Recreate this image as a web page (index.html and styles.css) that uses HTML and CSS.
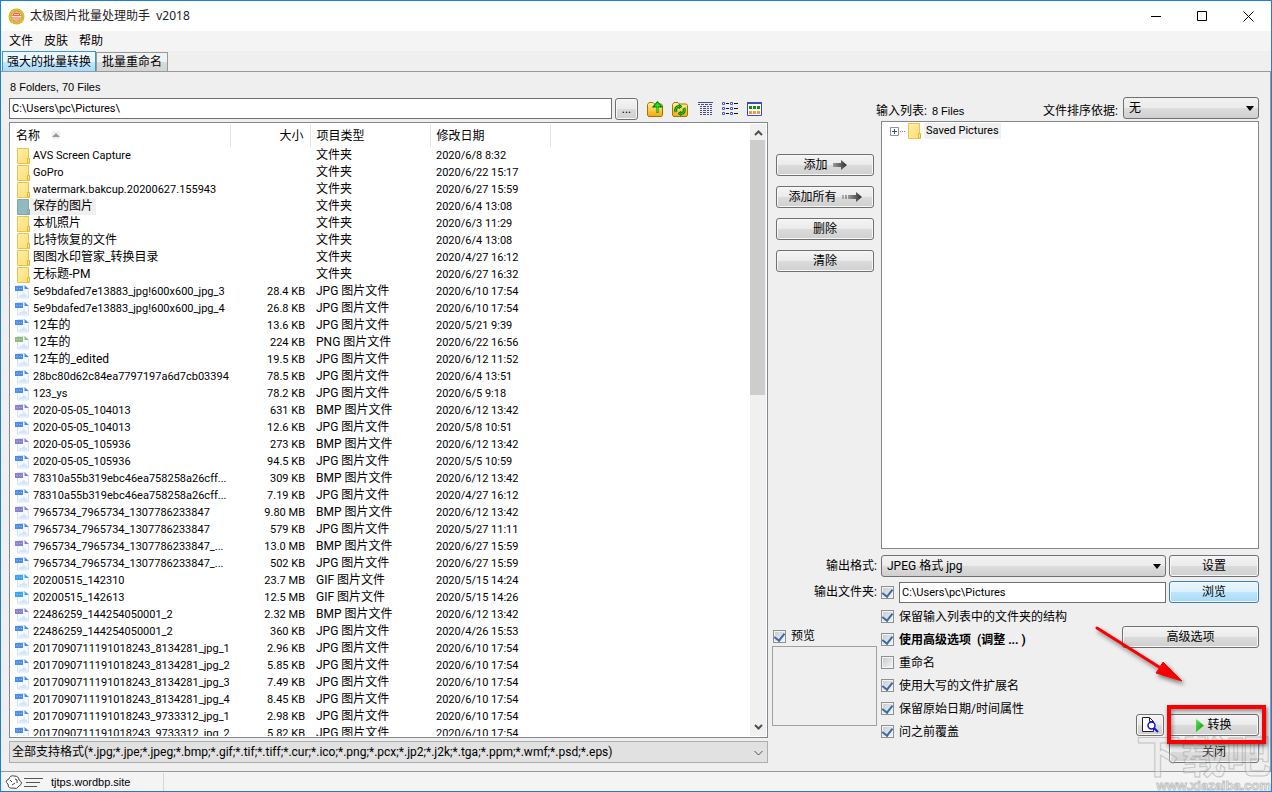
FILE: index.html
```html
<!DOCTYPE html>
<html lang="zh-CN">
<head>
<meta charset="utf-8">
<title>太极图片批量处理助手 v2018</title>
<link rel="stylesheet" href="styles.css">
</head>
<body>
<svg class="defs" aria-hidden="true">
  <defs>
    <linearGradient id="gold" x1="0" y1="0" x2="0" y2="1"><stop offset="0" stop-color="#fff3a8"/><stop offset="1" stop-color="#f5a800"/></linearGradient>
    <linearGradient id="dark" x1="0" y1="0" x2="1" y2="0"><stop offset="0" stop-color="#9a9a9a"/><stop offset="1" stop-color="#2e2e2e"/></linearGradient>
    <linearGradient id="play" x1="0" y1="0" x2="1" y2="1"><stop offset="0" stop-color="#5dea5d"/><stop offset="1" stop-color="#009000"/></linearGradient>
    <linearGradient id="fold" x1="0" y1="0" x2="1" y2="1"><stop offset="0" stop-color="#ffefa8"/><stop offset="1" stop-color="#ffdc70"/></linearGradient>
  </defs>
  <symbol id="folder" viewBox="0 0 15 16"><path d="M2.5 .5h11v10h1v5h-12z" fill="url(#fold)" stroke="#e9c44c"/><path d="M12.5 15v-4.500h2V15z" fill="#ffe48a" stroke="#e0b63c"/></symbol>
  <symbol id="folder-sel" viewBox="0 0 15 16"><path d="M2.500 .5h11v10h1v5h-12z" fill="#92bac0" stroke="#7ea9a6"/><path d="M12.500 15v-4.500h2V15z" fill="#98bfc0" stroke="#86aa98"/></symbol>
  <symbol id="file" viewBox="0 0 15 16"><path d="M2.500 1.500h7l4 4v8.500h-11z" fill="#f5f9ff" stroke="#d3e2f6"/><path d="M4 13q.5-3 3-2 1.500-3.500 3.500-.5 2 0 2 2.500z" fill="#d5e5fa"/><path d="M9.500 1v4H14z" fill="currentColor"/><path d="M0 2h8v5H0z" fill="currentColor"/><path d="M2 3.500v2M4 4.500h1M6 4.500h1" stroke="#fff" stroke-opacity=".4"/></symbol>
</svg>
<div class="window">
  <header class="titlebar">
    <svg class="logo" viewBox="0 0 17 17" width="17" height="17"><circle cx="8.500" cy="8.500" r="8" fill="#a9c62b"/><circle cx="8.500" cy="8.500" r="7" fill="#e5cf2c"/><circle cx="8.500" cy="8.500" r="5.500" fill="#fff0d6" stroke="#f2703a"/><path d="M4 8h9L11 4.500H6z" fill="#f16440"/><path d="M4 10h9M5 12h7" stroke="#f0653c"/><path d="M6 6.500h5" stroke="#ffe0b0"/></svg>
    <h1 class="title">太极图片批量处理助手&nbsp; v2018</h1>
    <div class="caption">
      <button type="button" aria-label="最小化"><svg width="10" height="10"><path d="M0 5.500h10" stroke="#000"/></svg></button>
      <button type="button" aria-label="最大化"><svg width="10" height="10"><path d="M.5.5h9v9h-9z" fill="none" stroke="#000"/></svg></button>
      <button type="button" aria-label="关闭窗口"><svg width="11" height="11"><path d="M.5.5l10 10M10.500.5l-10 10" stroke="#000" fill="none"/></svg></button>
    </div>
  </header>
  <nav class="menu">
    <button type="button">文件</button>
    <button type="button">皮肤</button>
    <button type="button">帮助</button>
  </nav>
  <div class="tabs" role="tablist">
    <button type="button" class="tab active" role="tab" aria-selected="true">强大的批量转换</button>
    <button type="button" class="tab" role="tab" aria-selected="false">批量重命名</button>
  </div>
  <main class="panel">
    <section class="browser">
      <p class="counts arial">8 Folders, 70 Files</p>
      <div class="pathrow">
        <input class="box" type="text" aria-label="路径" value="C:\Users\pc\Pictures\">
        <button type="button" class="btn dots" aria-label="浏览路径">...</button>
        <div class="tools">
          <button type="button" aria-label="上一级"><svg width="16" height="16" viewBox="0 0 16 16"><path d="M.5 14V3.500L2 1.500h4L7.500 3h7l1 1.500V14l-1 1.500h-13z" fill="url(#gold)" stroke="#a87400"/><path d="M10.500 12V5M7 5.500L10.500 1.500l3.500 4z" fill="#067a06" stroke="#067a06" stroke-width="2"/><path d="M10.500 11.500V4M8 5L10.500 2l2.500 3z" fill="#1bea1b" stroke="#1bea1b"/></svg></button>
          <button type="button" aria-label="刷新"><svg width="16" height="16" viewBox="0 0 16 16"><path d="M.5 14V3.500L2 1.500h4L7.500 3h7l1 1.500V14l-1 1.500h-13z" fill="url(#gold)" stroke="#a87400"/><path d="M4 11q-1.500-5 3-5.500M12 7q1.500 5-3 5.500" fill="none" stroke="#067a06" stroke-width="3"/><path d="M7 3.500v4l3-2zM9 10.500v4l-3-2z" fill="#1bd01b" stroke="#067a06"/><path d="M4 11q-1.500-5 3-5.500M12 7q1.500 5-3 5.500" fill="none" stroke="#2fdd2f"/></svg></button>
          <button type="button" aria-label="详细信息"><svg width="16" height="13" viewBox="0 0 16 13"><path d="M1 .5h15M1 2.500h2m1 0h3m1 0h3m1 0h3M3 4.500h2m1 0h3m1 0h2m1 0h2M3 6.500h2m1 0h3m1 0h2m1 0h2M3 8.500h2m1 0h3m1 0h2m1 0h2M3 10.500h2m1 0h3m1 0h2m1 0h2M3 12.500h2m1 0h3m1 0h2m1 0h2" stroke="#4a4a90"/></svg></button>
          <button type="button" aria-label="列表"><svg width="16" height="14" viewBox="0 0 16 14"><path d="M.5.500h2v2h-2zM8.500.500h2v2h-2zM.5 5.500h2v2h-2zM8.500 5.500h2v2h-2zM.5 10.500h2v2h-2zM8.500 10.500h2v2h-2z" fill="#fff" stroke="#5252c8"/><path d="M4 1.500h3m5 0h4M4 6.500h3m5 0h4M4 11.500h3m5 0h4" stroke="#111"/></svg></button>
          <button type="button" aria-label="缩略图"><svg width="15" height="14" viewBox="0 0 15 14"><path d="M.5.5h14v13H.5z" fill="#fff" stroke="#3f49c0"/><path d="M0 1h15" stroke="#3f49c0" stroke-width="2"/><path d="M2 4h3v3H2zM6 4h3v3H6zM10 4h3v3h-3z" fill="#0a970a"/><path d="M2 9h3v3H2zM6 9h3v3H6zM10 9h3v3h-3z" fill="#f79536"/></svg></button>
        </div>
      </div>
      <div class="filelist">
        <div class="rows">
          <table class="files">
            <colgroup><col class="c-name"><col class="c-size"><col class="c-type"><col class="c-date"><col></colgroup>
            <thead><tr><th>名称<svg class="sort" width="8" height="8"><path d="M0 6L4 2l4 4z" fill="#999"/></svg></th><th class="num">大小</th><th>项目类型</th><th>修改日期</th><th class="rest"></th></tr></thead>
            <tbody>
              <tr><td><svg class="ic"><use href="#folder"/></svg><span>AVS Screen Capture</span></td><td></td><td>文件夹</td><td>2020/6/8 8:32</td><td></td></tr>
              <tr><td><svg class="ic"><use href="#folder"/></svg><span>GoPro</span></td><td></td><td>文件夹</td><td>2020/6/22 15:17</td><td></td></tr>
              <tr><td><svg class="ic"><use href="#folder"/></svg><span>watermark.bakcup.20200627.155943</span></td><td></td><td>文件夹</td><td>2020/6/27 15:59</td><td></td></tr>
              <tr class="selected"><td><svg class="ic"><use href="#folder-sel"/></svg><span class="zh">保存的图片</span></td><td></td><td>文件夹</td><td>2020/6/4 13:08</td><td></td></tr>
              <tr><td><svg class="ic"><use href="#folder"/></svg><span class="zh">本机照片</span></td><td></td><td>文件夹</td><td>2020/6/3 11:29</td><td></td></tr>
              <tr><td><svg class="ic"><use href="#folder"/></svg><span class="zh">比特恢复的文件</span></td><td></td><td>文件夹</td><td>2020/6/4 13:08</td><td></td></tr>
              <tr><td><svg class="ic"><use href="#folder"/></svg><span class="zh">图图水印管家_转换目录</span></td><td></td><td>文件夹</td><td>2020/4/27 16:12</td><td></td></tr>
              <tr><td><svg class="ic"><use href="#folder"/></svg><span class="zh">无标题-PM</span></td><td></td><td>文件夹</td><td>2020/6/27 16:32</td><td></td></tr>
              <tr><td><svg class="ic jpg"><use href="#file"/></svg><span>5e9bdafed7e13883_jpg!600x600_jpg_3</span></td><td>28.4 KB</td><td>JPG 图片文件</td><td>2020/6/10 17:54</td><td></td></tr>
              <tr><td><svg class="ic jpg"><use href="#file"/></svg><span>5e9bdafed7e13883_jpg!600x600_jpg_4</span></td><td>26.8 KB</td><td>JPG 图片文件</td><td>2020/6/10 17:54</td><td></td></tr>
              <tr><td><svg class="ic jpg"><use href="#file"/></svg><span class="zh">12车的</span></td><td>13.6 KB</td><td>JPG 图片文件</td><td>2020/5/21 9:39</td><td></td></tr>
              <tr><td><svg class="ic png"><use href="#file"/></svg><span class="zh">12车的</span></td><td>224 KB</td><td>PNG 图片文件</td><td>2020/6/22 16:56</td><td></td></tr>
              <tr><td><svg class="ic jpg"><use href="#file"/></svg><span class="zh">12车的_edited</span></td><td>19.5 KB</td><td>JPG 图片文件</td><td>2020/6/12 11:52</td><td></td></tr>
              <tr><td><svg class="ic jpg"><use href="#file"/></svg><span>28bc80d62c84ea7797197a6d7cb03394</span></td><td>78.5 KB</td><td>JPG 图片文件</td><td>2020/6/4 13:51</td><td></td></tr>
              <tr><td><svg class="ic jpg"><use href="#file"/></svg><span>123_ys</span></td><td>78.2 KB</td><td>JPG 图片文件</td><td>2020/6/5 9:18</td><td></td></tr>
              <tr><td><svg class="ic bmp"><use href="#file"/></svg><span>2020-05-05_104013</span></td><td>631 KB</td><td>BMP 图片文件</td><td>2020/6/12 13:42</td><td></td></tr>
              <tr><td><svg class="ic jpg"><use href="#file"/></svg><span>2020-05-05_104013</span></td><td>12.6 KB</td><td>JPG 图片文件</td><td>2020/5/8 10:51</td><td></td></tr>
              <tr><td><svg class="ic bmp"><use href="#file"/></svg><span>2020-05-05_105936</span></td><td>273 KB</td><td>BMP 图片文件</td><td>2020/6/12 13:42</td><td></td></tr>
              <tr><td><svg class="ic jpg"><use href="#file"/></svg><span>2020-05-05_105936</span></td><td>94.5 KB</td><td>JPG 图片文件</td><td>2020/5/5 10:59</td><td></td></tr>
              <tr><td><svg class="ic bmp"><use href="#file"/></svg><span>78310a55b319ebc46ea758258a26cff...</span></td><td>309 KB</td><td>BMP 图片文件</td><td>2020/6/12 13:42</td><td></td></tr>
              <tr><td><svg class="ic jpg"><use href="#file"/></svg><span>78310a55b319ebc46ea758258a26cff...</span></td><td>7.19 KB</td><td>JPG 图片文件</td><td>2020/4/27 16:12</td><td></td></tr>
              <tr><td><svg class="ic bmp"><use href="#file"/></svg><span>7965734_7965734_1307786233847</span></td><td>9.80 MB</td><td>BMP 图片文件</td><td>2020/6/12 13:42</td><td></td></tr>
              <tr><td><svg class="ic jpg"><use href="#file"/></svg><span>7965734_7965734_1307786233847</span></td><td>579 KB</td><td>JPG 图片文件</td><td>2020/5/27 11:11</td><td></td></tr>
              <tr><td><svg class="ic bmp"><use href="#file"/></svg><span>7965734_7965734_1307786233847_...</span></td><td>13.0 MB</td><td>BMP 图片文件</td><td>2020/6/27 15:59</td><td></td></tr>
              <tr><td><svg class="ic jpg"><use href="#file"/></svg><span>7965734_7965734_1307786233847_...</span></td><td>502 KB</td><td>JPG 图片文件</td><td>2020/6/27 15:59</td><td></td></tr>
              <tr><td><svg class="ic gif"><use href="#file"/></svg><span>20200515_142310</span></td><td>23.7 MB</td><td>GIF 图片文件</td><td>2020/5/15 14:24</td><td></td></tr>
              <tr><td><svg class="ic gif"><use href="#file"/></svg><span>20200515_142613</span></td><td>12.5 MB</td><td>GIF 图片文件</td><td>2020/5/15 14:26</td><td></td></tr>
              <tr><td><svg class="ic bmp"><use href="#file"/></svg><span>22486259_144254050001_2</span></td><td>2.32 MB</td><td>BMP 图片文件</td><td>2020/6/12 13:42</td><td></td></tr>
              <tr><td><svg class="ic jpg"><use href="#file"/></svg><span>22486259_144254050001_2</span></td><td>360 KB</td><td>JPG 图片文件</td><td>2020/4/26 15:53</td><td></td></tr>
              <tr><td><svg class="ic jpg"><use href="#file"/></svg><span>2017090711191018243_8134281_jpg_1</span></td><td>2.96 KB</td><td>JPG 图片文件</td><td>2020/6/10 17:54</td><td></td></tr>
              <tr><td><svg class="ic jpg"><use href="#file"/></svg><span>2017090711191018243_8134281_jpg_2</span></td><td>5.85 KB</td><td>JPG 图片文件</td><td>2020/6/10 17:54</td><td></td></tr>
              <tr><td><svg class="ic jpg"><use href="#file"/></svg><span>2017090711191018243_8134281_jpg_3</span></td><td>7.49 KB</td><td>JPG 图片文件</td><td>2020/6/10 17:54</td><td></td></tr>
              <tr><td><svg class="ic jpg"><use href="#file"/></svg><span>2017090711191018243_8134281_jpg_4</span></td><td>8.45 KB</td><td>JPG 图片文件</td><td>2020/6/10 17:54</td><td></td></tr>
              <tr><td><svg class="ic jpg"><use href="#file"/></svg><span>2017090711191018243_9733312_jpg_1</span></td><td>2.98 KB</td><td>JPG 图片文件</td><td>2020/6/10 17:54</td><td></td></tr>
              <tr><td><svg class="ic jpg"><use href="#file"/></svg><span>2017090711191018243_9733312_jpg_2</span></td><td>5.82 KB</td><td>JPG 图片文件</td><td>2020/6/10 17:54</td><td></td></tr>
            </tbody>
          </table>
        </div>
        <div class="scroll">
          <svg width="9" height="6"><path d="M1 5l3.500-3.500L8 5" fill="none" stroke="#505050" stroke-width="2"/></svg>
          <div class="track"><div class="thumb"></div></div>
          <svg width="9" height="6"><path d="M1 1l3.500 3.500L8 1" fill="none" stroke="#505050" stroke-width="2"/></svg>
        </div>
      </div>
      <div class="drop flat">
        <select aria-label="文件筛选"><option>全部支持格式(*.jpg;*.jpe;*.jpeg;*.bmp;*.gif;*.tif;*.tiff;*.cur;*.ico;*.png;*.pcx;*.jp2;*.j2k;*.tga;*.ppm;*.wmf;*.psd;*.eps)</option></select>
        <svg width="9" height="6"><path d="M.5 1l4 4 4-4" fill="none" stroke="#505050"/></svg>
      </div>
    </section>

    <section class="work">
      <div class="inhead">
        <span class="inlabel">输入列表:</span><span class="arial">8 Files</span>
        <label class="sortlabel" for="sortby">文件排序依据:</label>
        <div class="drop sortdrop"><select id="sortby"><option>无</option></select><svg width="8" height="5"><path d="M0 0h8L4 5z"/></svg></div>
      </div>
      <div class="actions">
        <button type="button" class="btn">添加<svg width="14" height="10" viewBox="0 0 14 10"><path d="M0 3h8V0l6 5-6 5V7H0z" fill="url(#dark)"/></svg></button>
        <button type="button" class="btn">添加所有<svg width="20" height="10" viewBox="0 0 20 10"><path d="M0 3h2v4H0z" fill="#aaa"/><path d="M3 3h2v4H3z" fill="#999"/><path d="M6 3h8V0l6 5-6 5V7H6z" fill="url(#dark)"/></svg></button>
        <button type="button" class="btn">删除</button>
        <button type="button" class="btn">清除</button>
      </div>
      <div class="tree">
        <div class="node">
          <svg width="16" height="9" viewBox="0 0 16 9"><path d="M.5.500h8v8h-8z" fill="#fff" stroke="#919191"/><path d="M2 4.500h5M4.500 2v5" stroke="#33509b"/><path d="M10 4.500h6" stroke="#888" stroke-dasharray="1 1"/></svg>
          <svg class="ic"><use href="#folder"/></svg>
          <span>Saved Pictures</span>
        </div>
      </div>
      <label class="rlabel" for="format">输出格式:</label>
      <div class="outrow">
        <div class="drop"><select id="format"><option>JPEG 格式 jpg</option></select><svg width="8" height="5"><path d="M0 0h8L4 5z"/></svg></div>
        <button type="button" class="btn side">设置</button>
      </div>
      <label class="rlabel" for="outdir">输出文件夹:</label>
      <div class="outrow">
        <input class="tick" type="checkbox" aria-label="启用输出文件夹" checked>
        <input class="box" id="outdir" type="text" value="C:\Users\pc\Pictures">
        <button type="button" class="btn side hot">浏览</button>
      </div>
      <div class="preview">
        <label class="opt"><input class="tick" type="checkbox" checked>预览</label>
        <div class="canvas"></div>
      </div>
      <div class="options">
        <div class="checks">
          <label class="opt"><input class="tick" type="checkbox" checked>保留输入列表中的文件夹的结构</label>
          <label class="opt strong"><input class="tick" type="checkbox" checked>使用高级选项&nbsp; (调整 ... )</label>
          <label class="opt"><input class="tick" type="checkbox">重命名</label>
          <label class="opt"><input class="tick" type="checkbox" checked>使用大写的文件扩展名</label>
          <label class="opt"><input class="tick" type="checkbox" checked>保留原始日期/时间属性</label>
          <label class="opt"><input class="tick" type="checkbox" checked>问之前覆盖</label>
        </div>
        <div class="finish">
          <button type="button" class="btn adv">高级选项</button>
          <svg class="arrow" width="100" height="68" viewBox="0 0 100 68"><path d="M6 6l62 39" stroke="#fb0000" stroke-width="3" stroke-linecap="round"/><path d="M72 40l19 19-26-8 4-6z" fill="#fb0000" stroke="#fb0000" stroke-linejoin="round"/></svg>
          <div class="run">
            <button type="button" class="btn find" aria-label="预览结果"><svg width="17" height="16" viewBox="0 0 17 16"><path d="M11.500 5V4.500L7.500.5h-7v14h11V12M7.500.5v4h4" fill="#fff" stroke="#222"/><circle cx="9.500" cy="8.500" r="3.500" fill="#fff" stroke="#1010e0" stroke-width="1.500"/><path d="M12 11l4 4" stroke="#1010e0" stroke-width="2"/></svg></button>
            <div class="convert">
              <button type="button" class="btn side"><svg width="8" height="13" viewBox="0 0 8 13"><path d="M0 0l8 6.500L0 13z" fill="url(#play)"/></svg>转换</button>
              <span class="mark"></span>
            </div>
          </div>
          <button type="button" class="btn side">关闭</button>
        </div>
      </div>
    </section>
  </main>
  <footer class="status">
    <svg width="38" height="16" viewBox="0 0 38 16"><path d="M3 10Q-1 7 4 5q1-4 5-3 5 0 5 4 5 3 0 6-2 4-6 2-5 1-5-4zM5 6l2 2M10 5q3 0 2 4M7 11l3-2" fill="#fff" stroke="#444"/><path d="M19 4.500h19M21 8.500h14M19 12.500h13" stroke="#555"/></svg>
    <a class="arial site" href="#">tjtps.wordbp.site</a>
  </footer>
  <div class="watermark" aria-hidden="true">
    <span class="wm-name">下载吧</span>
    <span class="wm-url">www.xiazaiba.com</span>
  </div>
</div>
</body>
</html>
```

FILE: styles.css
```css
* { box-sizing: border-box; }
html, body { height: 100%; }
body {
  margin: 0;
  font: 12px/16px Roboto, "Noto Sans CJK SC", sans-serif;
  color: #000;
  background: #efefef;
}
button, input, select { font: inherit; color: inherit; }
button, select { margin: 0; padding: 0; border: 0; background: none; }
p, h1 { margin: 0; }
svg { display: block; flex: none; }
.defs { position: absolute; width: 0; height: 0; }
.arial { font-family: "Liberation Sans", Arial, sans-serif; font-size: 11px; }

.window {
  position: relative;
  display: flex;
  flex-direction: column;
  height: 100vh;
  min-height: 560px;
  border: 1px solid #1b80d6;
  overflow: hidden;
}
.titlebar {
  display: flex;
  align-items: center;
  flex: none;
  height: 30px;
  padding-left: 7px;
  background: #fff;
}
.title {
  flex: 1;
  margin-left: 5px;
  font: 400 12px/16px "Noto Sans", "Noto Sans CJK SC", sans-serif;
  color: #222;
}
.caption { display: flex; }
.caption button { display: grid; place-items: center; width: 46px; height: 30px; }

.menu { display: flex; flex: none; gap: 11px; height: 20px; padding-left: 8px; background: #f4f4f4; }
.tabs { display: flex; flex: none; align-items: flex-end; height: 20px; padding-left: 1px; }
.tab {
  height: 19px;
  padding: 0 5px;
  border: 1px solid #999;
  border-bottom: 0;
  background: linear-gradient(#f2f2f2 50%, #dadada 50%, #d4d4d4);
}
.tab.active {
  height: 20px;
  padding: 0 4px;
  border-color: #3a9ac8;
  background: linear-gradient(#eaf7fe 50%, #c6e8fb 50%, #a8dcf8);
}

.panel {
  display: grid;
  grid-template-columns: minmax(0, 759fr) minmax(0, 487fr);
  grid-template-rows: minmax(0, 1fr);
  gap: 4px;
  flex: 1;
  min-height: 0;
  padding: 7px 11px 8px 8px;
  border: solid #999;
  border-width: 1px 1px 1px 0;
}
.browser { display: flex; flex-direction: column; gap: 3px; min-width: 0; }
.counts { line-height: 16px; padding-left: 1px; }
.pathrow { display: flex; align-items: center; gap: 3px; height: 21px; }
.box {
  flex: 1;
  min-width: 0;
  height: 21px;
  padding: 0 2px;
  border: 1px solid #707070;
  background: #fff;
  font-size: 11px;
}
.btn {
  display: flex;
  align-items: center;
  justify-content: center;
  gap: 5px;
  height: 22px;
  border: 1px solid #707070;
  border-radius: 3px;
  background: linear-gradient(#f4f4f4, #eaeaea 50%, #dbdbdb 50%, #d0d0d0);
  box-shadow: inset 0 0 0 1px #f7f7f7;
}
.btn.hot {
  border-color: #3c7fb1;
  background: linear-gradient(#eaf6fd, #d9f0fc 50%, #bee6fd 50%, #a7d9f5);
}
.dots { width: 23px; }
.tools { display: flex; align-items: center; justify-content: space-between; width: 115px; margin: 0 6px 0 6px; }
.tools button { display: block; }

.filelist {
  display: flex;
  flex: 1 1 0;
  min-height: 0;
  padding: 1px 1px 1px 0;
  border: 1px solid #828790;
  background: #fff;
}
.rows { flex: 1; min-width: 0; overflow: hidden; }
.files { width: 100%; border-collapse: collapse; table-layout: fixed; }
.c-name { width: 220px; }
.c-size { width: 80px; }
.c-type, .c-date { width: 120px; }
.files th {
  height: 23px;
  padding: 0 6px;
  border-right: 1px solid #e5e5e5;
  font-weight: 400;
  text-align: left;
}
.files .num { text-align: right; }
.files .rest { border: 0; }
.files tbody { font-size: 11px; }
.files td { height: 17px; padding: 0 6px; line-height: 17px; white-space: nowrap; }
.files td:nth-child(1) { display: flex; align-items: center; padding: 0 0 0 5px; }
.files td:nth-child(1) span { padding: 0 3px; }
.files td:nth-child(2) { padding-right: 5px; text-align: right; }
.files td:nth-child(3), .files .zh { font-size: 12px; }
.selected span { background: #f0f0f0; }
.sort { display: inline-block; margin-left: 12px; vertical-align: 1px; background: #f0f0f0; }
.ic { width: 15px; height: 16px; }
.jpg { color: #4a8ce6; }
.png { color: #8fbd7d; }
.bmp { color: #8a80c8; }
.gif { color: #38a3ee; }

.scroll { display: flex; flex-direction: column; align-items: center; width: 16px; padding: 6px 0; background: #f0f0f0; }
.track { flex: 1; align-self: stretch; margin: 4px 1px 4px 0; }
.thumb { height: 44%; background: #cdcdcd; }

.drop { position: relative; display: flex; flex: 1; min-width: 0; height: 22px; }
.drop select {
  appearance: none;
  width: 100%;
  padding: 0 20px 0 5px;
  border: 1px solid #707070;
  border-radius: 3px;
  background: linear-gradient(#f2f2f2, #ebebeb 50%, #dddddd 50%, #cfcfcf);
}
.drop svg { position: absolute; right: 5px; top: 9px; pointer-events: none; }
.drop.flat { flex: none; }
.drop.flat select { padding-left: 2px; border-color: #adadad; border-radius: 0; background: #e1e1e1; }

.work {
  display: grid;
  grid-template-columns: 105px minmax(0, 1fr);
  grid-template-rows: 22px minmax(0, 1fr) 26px 22px 160px;
  column-gap: 4px;
  padding-top: 18px;
}
.inhead { grid-column: 1 / 3; display: flex; align-items: flex-end; padding-left: 104px; }
.inlabel { margin-right: 5px; }
.sortlabel { margin-left: auto; margin-right: 5px; }
.sortdrop { flex: none; width: 36%; max-width: 136px; }
.actions { display: flex; flex-direction: column; gap: 10px; padding: 35px 3px 0 4px; }
.tree { margin: 2px 0 6px; padding: 1px 8px; border: 1px solid #828790; background: #fff; }
.node { display: flex; align-items: center; font-size: 11px; }
.node span { margin-left: 3px; padding: 0 2px; background: #f0f0f0; }
.rlabel { text-align: right; line-height: 22px; }
.outrow { display: flex; align-items: center; align-self: start; gap: 3px; height: 22px; }
.side { width: 90px; flex: none; }
.tick {
  appearance: none;
  display: grid;
  place-items: center;
  flex: none;
  width: 13px;
  height: 13px;
  margin: 0 2px 0 0;
  border: 1px solid #8e8f8f;
  background: linear-gradient(135deg, #c4c9cf, #f6f6f6);
  box-shadow: inset 0 0 0 1px #f4f4f4;
}
.tick:checked::after {
  content: "";
  width: 5px;
  height: 8px;
  margin-bottom: 2px;
  border: solid #3a6ba8;
  border-width: 0 2px 2px 0;
  transform: rotate(38deg);
}
.opt { display: flex; align-items: center; gap: 3px; height: 23px; white-space: nowrap; }
.strong { font-weight: 700; }
.preview { padding: 23px 0 0 0; }
.preview .opt { height: 20px; padding-left: 1px; }
.canvas { height: 80px; border: 1px solid #a0a0a0; }
.options { display: flex; }
.checks { flex: 1; min-width: 0; padding-top: 2px; }
.finish { position: relative; display: flex; flex-direction: column; align-items: flex-end; gap: 5px; padding-top: 23px; }
.adv { width: 137px; }
.run { display: flex; gap: 5px; margin-top: auto; }
.find { width: 28px; }
.convert { position: relative; z-index: 1; }
.convert .btn { gap: 3px; }
.mark {
  position: absolute;
  inset: -9px -7px -8px -2px;
  border: 4px solid #fb0000;
  box-shadow: 1px 2px 4px rgba(0, 0, 0, .55), inset 1px 2px 4px rgba(0, 0, 0, .45);
  pointer-events: none;
}
.arrow { position: absolute; right: 68px; top: 19px; filter: drop-shadow(2px 3px 2px rgba(0, 0, 0, .5)); pointer-events: none; }

.status {
  display: flex;
  align-items: center;
  flex: none;
  height: 19px;
  margin-left: 2px;
  padding-left: 2px;
  background: #f4f4f4;
}
.status .site {
  width: 113px;
  margin-left: 8px;
  border-right: 1px solid #d5d5d5;
  color: inherit;
  line-height: 18px;
  text-decoration: none;
}
.watermark {
  position: absolute;
  right: 0;
  bottom: 0;
  display: flex;
  flex-direction: column;
  align-items: flex-end;
  color: rgba(235, 235, 235, .3);
  -webkit-text-stroke: 1px rgba(150, 150, 150, .5);
  font-weight: 700;
  pointer-events: none;
}
.wm-name { font-size: 45px; line-height: 44px; }
.wm-url { font: 700 13px/11px "Liberation Sans", Arial, sans-serif; }
```
